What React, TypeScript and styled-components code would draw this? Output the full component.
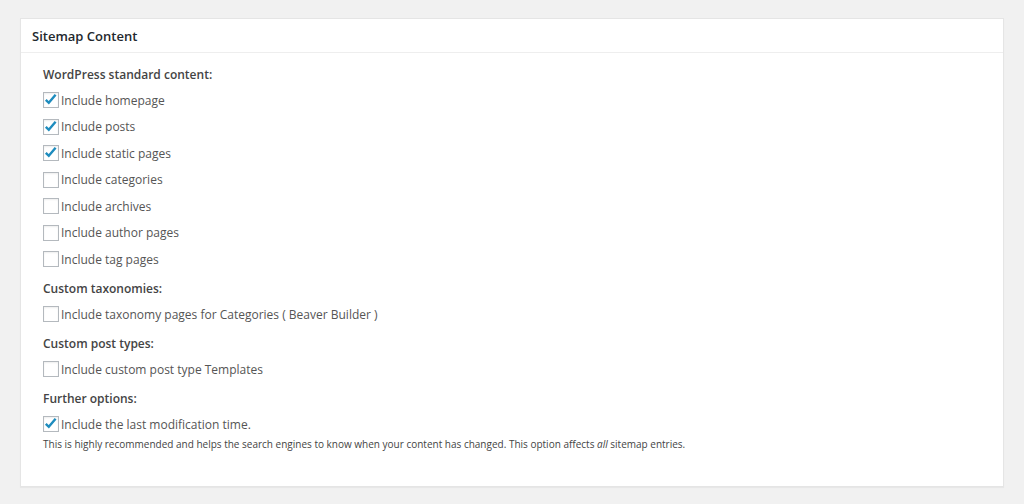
import React from 'react';
import styled, { createGlobalStyle } from 'styled-components';

const GlobalStyle = createGlobalStyle`
    html, body {
        margin: 0;
        padding: 0;
        background: #f1f1f1;
    }
    body {
        font-family: "Open Sans", "Noto Sans", sans-serif;
        color: #444;
    }
`;

const Page = styled.div`
    padding: 18px 20px;
    width: 1024px;
    box-sizing: border-box;
`;

const Panel = styled.section`
    background: #fff;
    border: 1px solid #e5e5e5;
    box-shadow: 0 1px 1px rgba(0, 0, 0, 0.04);
`;

const PanelHeader = styled.h2`
    margin: 0;
    height: 33px;
    display: flex;
    align-items: center;
    padding: 0 11px;
    border-bottom: 1px solid #eee;
    font-size: 13px;
    font-weight: 600;
    color: #23282d;
`;

const PanelBody = styled.div`
    padding: 9px 22px 36px;
`;

const Section = styled.div`
    & + & {
        margin-top: 3.5px;
    }
`;

const SectionTitle = styled.div`
    height: 25px;
    line-height: 25px;
    font-size: 12px;
    font-weight: 600;
    color: #444;
`;

const Row = styled.label`
    height: 26.5px;
    display: flex;
    align-items: center;
    gap: 2px;
    font-size: 12px;
    color: #555;
`;

const Box = styled.span`
    width: 16px;
    height: 16px;
    box-sizing: border-box;
    border: 1px solid #b4b9be;
    box-shadow: inset 0 1px 2px rgba(0, 0, 0, 0.07);
    background: #fff;
    display: flex;
    align-items: center;
    justify-content: center;
    flex-shrink: 0;
    overflow: visible;
`;

const Hint = styled.p`
    margin: 0;
    font-size: 10px;
    line-height: 12px;
    color: #444;
`;

function Checkbox({ checked }: { checked: boolean }) {
    return (
        <Box>
            {checked && (
                <svg width="16" height="16" viewBox="0 0 16 16" style={{ overflow: 'visible' }}>
                    <path
                        d="M2.8 7.8 L5.8 10.8 L12.6 2.8"
                        fill="none"
                        stroke="#1e8cbe"
                        strokeWidth="2.4"
                    />
                </svg>
            )}
        </Box>
    );
}

type Option = { label: string; checked: boolean };

const sections: { title: string; options: Option[] }[] = [
    {
        title: 'WordPress standard content:',
        options: [
            { label: 'Include homepage', checked: true },
            { label: 'Include posts', checked: true },
            { label: 'Include static pages', checked: true },
            { label: 'Include categories', checked: false },
            { label: 'Include archives', checked: false },
            { label: 'Include author pages', checked: false },
            { label: 'Include tag pages', checked: false },
        ],
    },
    {
        title: 'Custom taxonomies:',
        options: [{ label: 'Include taxonomy pages for Categories ( Beaver Builder )', checked: false }],
    },
    {
        title: 'Custom post types:',
        options: [{ label: 'Include custom post type Templates', checked: false }],
    },
    {
        title: 'Further options:',
        options: [{ label: 'Include the last modification time.', checked: true }],
    },
];

export default function App() {
    return (
        <Page>
            <GlobalStyle />
            <Panel>
                <PanelHeader>Sitemap Content</PanelHeader>
                <PanelBody>
                    {sections.map((s) => (
                        <Section key={s.title}>
                            <SectionTitle>{s.title}</SectionTitle>
                            {s.options.map((o) => (
                                <Row key={o.label}>
                                    <Checkbox checked={o.checked} />
                                    {o.label}
                                </Row>
                            ))}
                        </Section>
                    ))}
                    <Hint>
                        This is highly recommended and helps the search engines to know when your content has
                        changed. This option affects <i>all</i> sitemap entries.
                    </Hint>
                </PanelBody>
            </Panel>
        </Page>
    );
}
